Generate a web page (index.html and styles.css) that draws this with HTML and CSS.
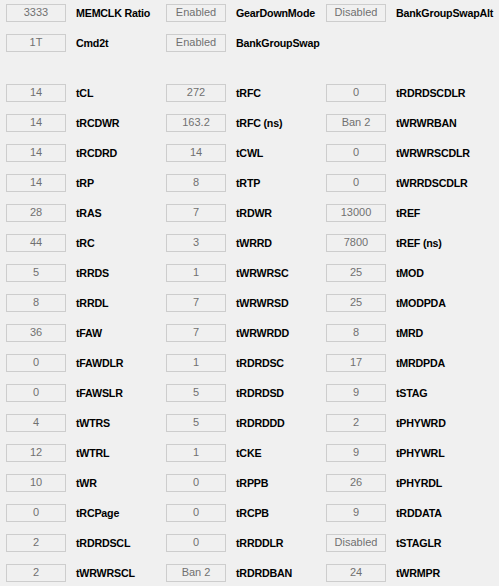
FILE: index.html
```html
<!DOCTYPE html>
<html>
<head>
<meta charset="utf-8">
<link rel="stylesheet" href="styles.css">
</head>
<body>
<div class="grid top">
  <div class="cell"><div class="box">3333</div><div class="lbl">MEMCLK Ratio</div></div>
  <div class="cell"><div class="box">Enabled</div><div class="lbl">GearDownMode</div></div>
  <div class="cell"><div class="box">Disabled</div><div class="lbl">BankGroupSwapAlt</div></div>
  <div class="cell"><div class="box">1T</div><div class="lbl">Cmd2t</div></div>
  <div class="cell"><div class="box">Enabled</div><div class="lbl">BankGroupSwap</div></div>
</div>
<div class="grid main">
  <div class="cell"><div class="box">14</div><div class="lbl">tCL</div></div>
  <div class="cell"><div class="box">272</div><div class="lbl">tRFC</div></div>
  <div class="cell"><div class="box">0</div><div class="lbl">tRDRDSCDLR</div></div>

  <div class="cell"><div class="box">14</div><div class="lbl">tRCDWR</div></div>
  <div class="cell"><div class="box">163.2</div><div class="lbl">tRFC (ns)</div></div>
  <div class="cell"><div class="box">Ban 2</div><div class="lbl">tWRWRBAN</div></div>

  <div class="cell"><div class="box">14</div><div class="lbl">tRCDRD</div></div>
  <div class="cell"><div class="box">14</div><div class="lbl">tCWL</div></div>
  <div class="cell"><div class="box">0</div><div class="lbl">tWRWRSCDLR</div></div>

  <div class="cell"><div class="box">14</div><div class="lbl">tRP</div></div>
  <div class="cell"><div class="box">8</div><div class="lbl">tRTP</div></div>
  <div class="cell"><div class="box">0</div><div class="lbl">tWRRDSCDLR</div></div>

  <div class="cell"><div class="box">28</div><div class="lbl">tRAS</div></div>
  <div class="cell"><div class="box">7</div><div class="lbl">tRDWR</div></div>
  <div class="cell"><div class="box">13000</div><div class="lbl">tREF</div></div>

  <div class="cell"><div class="box">44</div><div class="lbl">tRC</div></div>
  <div class="cell"><div class="box">3</div><div class="lbl">tWRRD</div></div>
  <div class="cell"><div class="box">7800</div><div class="lbl">tREF (ns)</div></div>

  <div class="cell"><div class="box">5</div><div class="lbl">tRRDS</div></div>
  <div class="cell"><div class="box">1</div><div class="lbl">tWRWRSC</div></div>
  <div class="cell"><div class="box">25</div><div class="lbl">tMOD</div></div>

  <div class="cell"><div class="box">8</div><div class="lbl">tRRDL</div></div>
  <div class="cell"><div class="box">7</div><div class="lbl">tWRWRSD</div></div>
  <div class="cell"><div class="box">25</div><div class="lbl">tMODPDA</div></div>

  <div class="cell"><div class="box">36</div><div class="lbl">tFAW</div></div>
  <div class="cell"><div class="box">7</div><div class="lbl">tWRWRDD</div></div>
  <div class="cell"><div class="box">8</div><div class="lbl">tMRD</div></div>

  <div class="cell"><div class="box">0</div><div class="lbl">tFAWDLR</div></div>
  <div class="cell"><div class="box">1</div><div class="lbl">tRDRDSC</div></div>
  <div class="cell"><div class="box">17</div><div class="lbl">tMRDPDA</div></div>

  <div class="cell"><div class="box">0</div><div class="lbl">tFAWSLR</div></div>
  <div class="cell"><div class="box">5</div><div class="lbl">tRDRDSD</div></div>
  <div class="cell"><div class="box">9</div><div class="lbl">tSTAG</div></div>

  <div class="cell"><div class="box">4</div><div class="lbl">tWTRS</div></div>
  <div class="cell"><div class="box">5</div><div class="lbl">tRDRDDD</div></div>
  <div class="cell"><div class="box">2</div><div class="lbl">tPHYWRD</div></div>

  <div class="cell"><div class="box">12</div><div class="lbl">tWTRL</div></div>
  <div class="cell"><div class="box">1</div><div class="lbl">tCKE</div></div>
  <div class="cell"><div class="box">9</div><div class="lbl">tPHYWRL</div></div>

  <div class="cell"><div class="box">10</div><div class="lbl">tWR</div></div>
  <div class="cell"><div class="box">0</div><div class="lbl">tRPPB</div></div>
  <div class="cell"><div class="box">26</div><div class="lbl">tPHYRDL</div></div>

  <div class="cell"><div class="box">0</div><div class="lbl">tRCPage</div></div>
  <div class="cell"><div class="box">0</div><div class="lbl">tRCPB</div></div>
  <div class="cell"><div class="box">9</div><div class="lbl">tRDDATA</div></div>

  <div class="cell"><div class="box">2</div><div class="lbl">tRDRDSCL</div></div>
  <div class="cell"><div class="box">0</div><div class="lbl">tRRDDLR</div></div>
  <div class="cell"><div class="box">Disabled</div><div class="lbl">tSTAGLR</div></div>

  <div class="cell"><div class="box">2</div><div class="lbl">tWRWRSCL</div></div>
  <div class="cell"><div class="box">Ban 2</div><div class="lbl">tRDRDBAN</div></div>
  <div class="cell"><div class="box">24</div><div class="lbl">tWRMPR</div></div>
</div>
</body>
</html>
```
FILE: styles.css
```css
html, body {
  margin: 0;
  padding: 0;
  background: #f0f0f0;
  font-family: "Liberation Sans", Arial, sans-serif;
  font-size: 11px;
}
.grid {
  display: grid;
  grid-template-columns: 160px 160px auto;
  row-gap: 12px;
  padding-left: 6px;
}
.top {
  padding-top: 4px;
}
.main {
  margin-top: 32px;
}
.cell {
  display: flex;
  align-items: center;
  gap: 10px;
  height: 18px;
}
.box {
  box-sizing: border-box;
  width: 60px;
  height: 18px;
  border: 1px solid #cdcdcd;
  background: #f0f0f0;
  color: #707070;
  text-align: center;
  line-height: 15px;
  font-size: 11px;
  flex: none;
}
.lbl {
  font-weight: bold;
  font-size: 10.7px;
  letter-spacing: -0.2px;
  color: #000;
  white-space: nowrap;
}
```
